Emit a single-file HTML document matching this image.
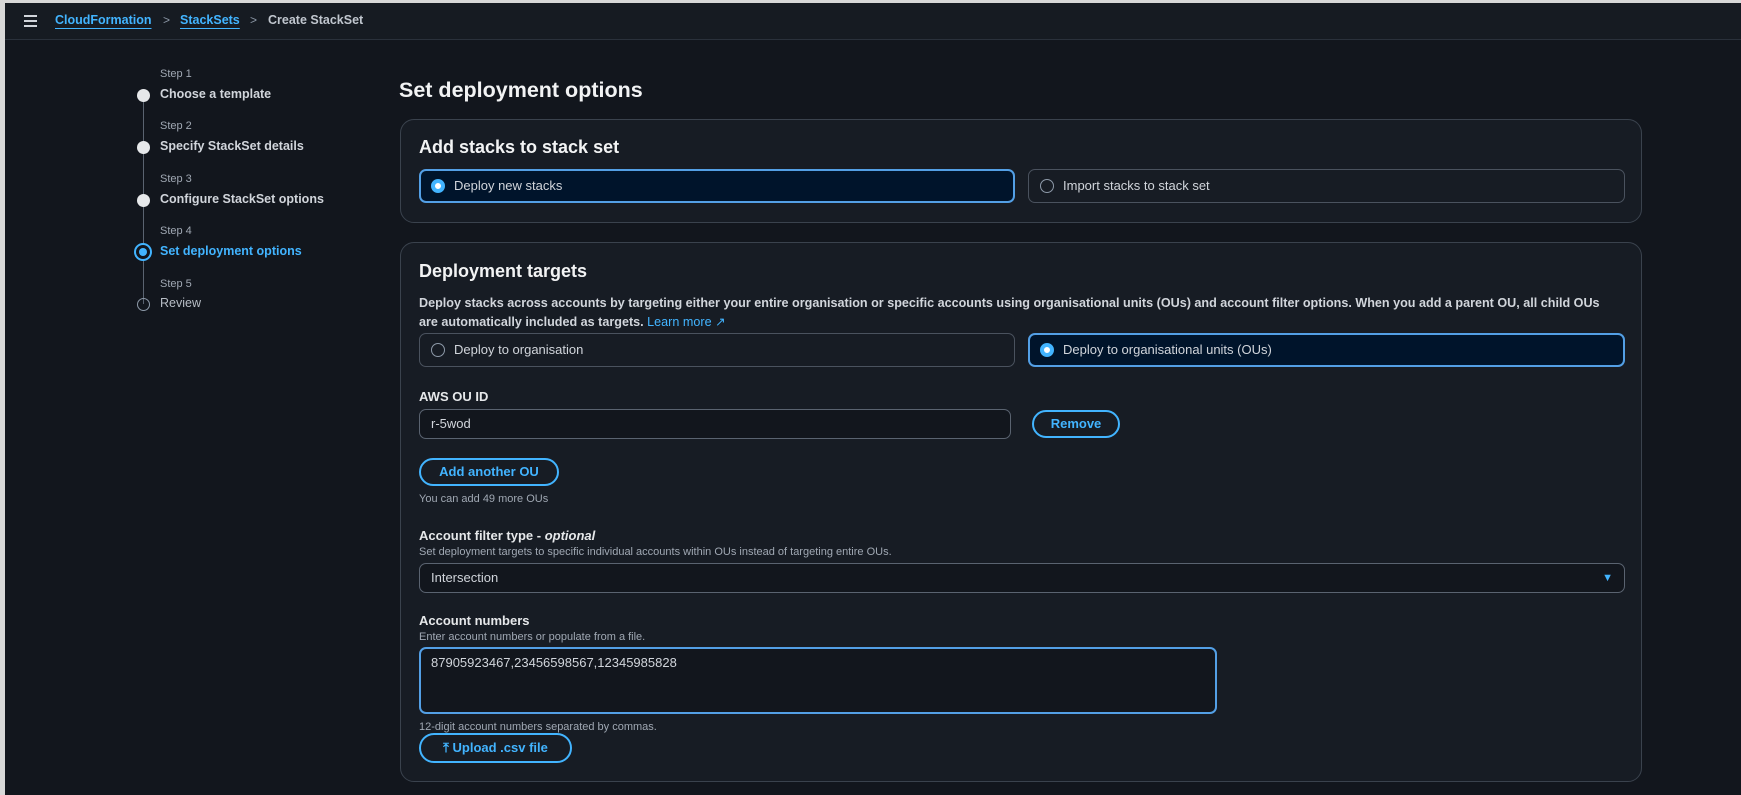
<!DOCTYPE html>
<html><head><meta charset="utf-8"><style>
*{box-sizing:border-box;margin:0;padding:0}
body{width:1741px;height:795px;background:#12161d;font-family:"Liberation Sans",sans-serif;color:#d1d5db;position:relative;overflow:hidden}
.a{position:absolute;white-space:nowrap}
.top{position:absolute;left:0;top:0;width:1741px;height:40px;background:#161b22;border-bottom:1px solid #2a313b}
.bc{font-size:12.5px;font-weight:bold;color:#42b4ff;text-decoration:underline;text-underline-offset:4px}
.sep{color:#8d99a8;font-size:12px}
.step{font-size:11px;color:#a0a8b3}
.lbl{font-size:12.5px;color:#d1d5db;font-weight:bold}
.dot{position:absolute;width:13px;height:13px;border-radius:50%;background:#e6e8ea}
.box{position:absolute;left:400px;width:1242px;background:#171c24;border:1px solid #3a424d;border-radius:14px}
.h2{font-size:18px;font-weight:bold;color:#f2f3f4}
.tile{position:absolute;height:34px;border:1px solid #4a525e;border-radius:7px;font-size:13px;color:#d1d5db;padding:0 0 0 34px;line-height:32px}
.tile.sel{border:2px solid #539fe5;background:#00142b;line-height:30px;padding-left:33px}
.rad{position:absolute;left:11px;top:9px;width:14px;height:14px;border-radius:50%;border:1.5px solid #8d99a8}
.sel .rad{left:10px;top:8px;border:4px solid #42b4ff;background:#fff}
.btn{position:absolute;border:2px solid #42b4ff;border-radius:16px;color:#42b4ff;font-weight:bold;font-size:13px;text-align:center}
.inp{position:absolute;border:1px solid #5a6370;border-radius:7px;background:#12161d;font-size:13px;color:#d1d5db;padding-left:11px}
.fl{font-size:13px;font-weight:bold;color:#e6e8ea}
.ds{font-size:11px;color:#a0a8b3}
</style></head><body>
<div class="top">
 <div class="a" style="left:24px;top:15px;width:13px">
  <div style="height:2px;background:#d1d5db;margin-bottom:3px"></div><div style="height:2px;background:#d1d5db;margin-bottom:3px"></div><div style="height:2px;background:#d1d5db"></div></div>
 <div class="a bc" style="left:55px;top:13px">CloudFormation</div>
 <div class="a sep" style="left:163px;top:13px">&gt;</div>
 <div class="a bc" style="left:180px;top:13px">StackSets</div>
 <div class="a sep" style="left:250px;top:13px">&gt;</div>
 <div class="a" style="left:268px;top:13px;font-size:12.5px;font-weight:bold;color:#c0c6ce">Create StackSet</div>
</div>
<div class="a" style="left:0;top:0;width:1741px;height:3px;background:#d8d8d8"></div>
<div class="a" style="left:0;top:0;width:5px;height:795px;background:#d8d8d8"></div>

<div class="a" style="left:143px;top:96px;width:1px;height:208px;background:#5a6370"></div>
<div class="a step" style="left:160px;top:68px">Step 1</div><div class="dot" style="left:137px;top:89px"></div><div class="a lbl" style="left:160px;top:87px">Choose a template</div>
<div class="a step" style="left:160px;top:120px">Step 2</div><div class="dot" style="left:137px;top:141px"></div><div class="a lbl" style="left:160px;top:139px">Specify StackSet details</div>
<div class="a step" style="left:160px;top:173px">Step 3</div><div class="dot" style="left:137px;top:194px"></div><div class="a lbl" style="left:160px;top:192px">Configure StackSet options</div>
<div class="a step" style="left:160px;top:225px">Step 4</div>
<div class="a" style="left:134px;top:243px;width:18px;height:18px;border-radius:50%;border:2px solid #42b4ff;background:#12161d"><div style="margin:3px;width:8px;height:8px;border-radius:50%;background:#42b4ff"></div></div>
<div class="a lbl" style="left:160px;top:244px;color:#42b4ff">Set deployment options</div>
<div class="a step" style="left:160px;top:278px">Step 5</div>
<div class="a" style="left:137px;top:298px;width:13px;height:13px;border-radius:50%;border:1.5px solid #8d99a8"></div>
<div class="a lbl" style="left:160px;top:296px;font-weight:normal;color:#b8bec6">Review</div>

<div class="a" style="left:399px;top:78px;font-size:21.5px;font-weight:bold;color:#f2f3f4">Set deployment options</div>

<div class="box" style="top:119px;height:104px">
 <div class="a h2" style="left:18px;top:17px">Add stacks to stack set</div>
 <div class="tile sel" style="left:18px;top:49px;width:596px"><div class="rad"></div>Deploy new stacks</div>
 <div class="tile" style="left:627px;top:49px;width:597px"><div class="rad"></div>Import stacks to stack set</div>
</div>

<div class="box" style="top:242px;height:540px">
 <div class="a h2" style="left:18px;top:18px">Deployment targets</div>
 <div class="a" style="left:18px;top:51px;font-size:12.6px;font-weight:bold;color:#d1d5db;line-height:19px;width:1220px;white-space:normal">Deploy stacks across accounts by targeting either your entire organisation or specific accounts using organisational units (OUs) and account filter options. When you add a parent OU, all child OUs<br>are automatically included as targets. <span style="color:#42b4ff;font-weight:normal">Learn more &#x2197;</span></div>
 <div class="tile" style="left:18px;top:90px;width:596px"><div class="rad"></div>Deploy to organisation</div>
 <div class="tile sel" style="left:627px;top:90px;width:597px"><div class="rad"></div>Deploy to organisational units (OUs)</div>
 <div class="a fl" style="left:18px;top:146px">AWS OU ID</div>
 <div class="inp" style="left:18px;top:166px;width:592px;height:30px;line-height:28px">r-5wod</div>
 <div class="btn" style="left:631px;top:167px;width:88px;height:28px;line-height:24px">Remove</div>
 <div class="btn" style="left:18px;top:215px;width:140px;height:28px;line-height:24px">Add another OU</div>
 <div class="a ds" style="left:18px;top:250px">You can add 49 more OUs</div>
 <div class="a fl" style="left:18px;top:285px">Account filter type - <i>optional</i></div>
 <div class="a ds" style="left:18px;top:303px">Set deployment targets to specific individual accounts within OUs instead of targeting entire OUs.</div>
 <div class="inp" style="left:18px;top:320px;width:1206px;height:30px;line-height:28px">Intersection<span style="position:absolute;right:11px;top:0;color:#42b4ff;font-size:11px">&#9660;</span></div>
 <div class="a fl" style="left:18px;top:370px">Account numbers</div>
 <div class="a ds" style="left:18px;top:388px">Enter account numbers or populate from a file.</div>
 <div class="inp" style="left:18px;top:404px;width:798px;height:67px;border:2px solid #539fe5;padding-top:6px;padding-left:10px;line-height:16px">87905923467,23456598567,12345985828</div>
 <div class="a ds" style="left:18px;top:478px">12-digit account numbers separated by commas.</div>
 <div class="btn" style="left:18px;top:490px;width:153px;height:30px;line-height:26px">&#x2912; Upload .csv file</div>
</div>
</body></html>
